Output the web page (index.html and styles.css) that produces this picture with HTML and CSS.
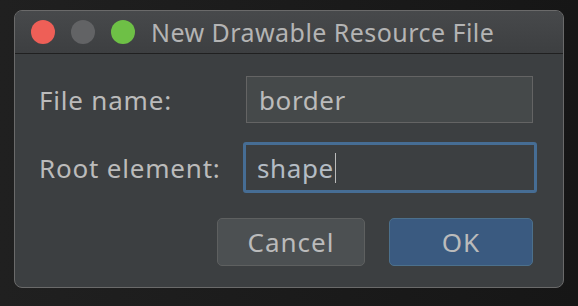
FILE: index.html
```html
<!DOCTYPE html>
<html>
<head>
    <title>New Drawable Resource File</title>
    <link rel="stylesheet" href="styles.css">
</head>
<body>
    <div class="dialog">
        <div class="title-bar">
            <div class="lights">
                <span class="light red"></span>
                <span class="light gray"></span>
                <span class="light green"></span>
            </div>
            <div class="title">New Drawable Resource File</div>
        </div>
        <div class="content">
            <form class="fields">
                <label class="field-label" for="fileName">File name:</label>
                <div class="field">border</div>
                <label class="field-label" for="rootElement">Root element:</label>
                <div class="field focused">shape<span class="caret"></span></div>
            </form>
            <div class="buttons">
                <button class="btn">Cancel</button>
                <button class="btn primary">OK</button>
            </div>
        </div>
    </div>
</body>
</html>
```

FILE: styles.css
```css
body {
    margin: 0;
    height: 306px;
    background: linear-gradient(90deg, #202020, #161616);
    font-family: "Noto Sans", "Liberation Sans", sans-serif;
    overflow: hidden;
}
.dialog {
    box-sizing: border-box;
    width: 550px;
    height: 278px;
    margin: 10px 0 0 14px;
    background-color: #3c3f41;
    border: 1px solid #6a6a6a;
    border-radius: 8px;
    overflow: hidden;
}
.title-bar {
    display: flex;
    align-items: center;
    height: 42px;
    background: linear-gradient(#47494b, #3d3f41);
    border-bottom: 1px solid #202020;
}
.lights {
    display: flex;
    gap: 16px;
    padding-left: 16px;
}
.light {
    width: 24px;
    height: 24px;
    border-radius: 50%;
}
.light.red {
    background-color: #ee5f57;
}
.light.gray {
    background-color: #626365;
}
.light.green {
    background-color: #6ec046;
}
.title {
    margin-left: 16px;
    font-size: 25px;
    letter-spacing: 0.45px;
    color: #b4b4b4;
}
.content {
    padding: 22px 30px 0 24px;
}
.fields {
    display: grid;
    grid-template-columns: 207px 287px;
    row-gap: 19px;
    align-items: center;
    margin: 0;
}
.field-label {
    font-size: 26px;
    color: #bbbbbb;
    letter-spacing: 0.8px;
}
.field {
    box-sizing: border-box;
    height: 47px;
    display: flex;
    align-items: center;
    padding-left: 12px;
    background-color: #45494a;
    border: 1px solid #646464;
    font-size: 26px;
    color: #bbbbbb;
    letter-spacing: 0.6px;
}
.field.focused {
    height: 51px;
    margin-left: -3px;
    width: 294px;
    padding-left: 11px;
    background-color: #3c3f41;
    border: 3px solid #466d94;
    border-radius: 3px;
    color: #b4bcc4;
}
.caret {
    display: inline-block;
    width: 1px;
    height: 30px;
    margin-left: 1px;
    background-color: #bbbbbb;
}
.buttons {
    display: flex;
    justify-content: flex-end;
    gap: 24px;
    margin-top: 25px;
}
.btn {
    box-sizing: border-box;
    height: 48px;
    border-radius: 5px;
    font-family: inherit;
    font-size: 26px;
    color: #bbbbbb;
    letter-spacing: 1px;
    background-color: #4c5052;
    border: 1px solid #5e6060;
    width: 148px;
}
.btn.primary {
    width: 144px;
    background-color: #3a5a80;
    border-color: #4c708c;
}
```
